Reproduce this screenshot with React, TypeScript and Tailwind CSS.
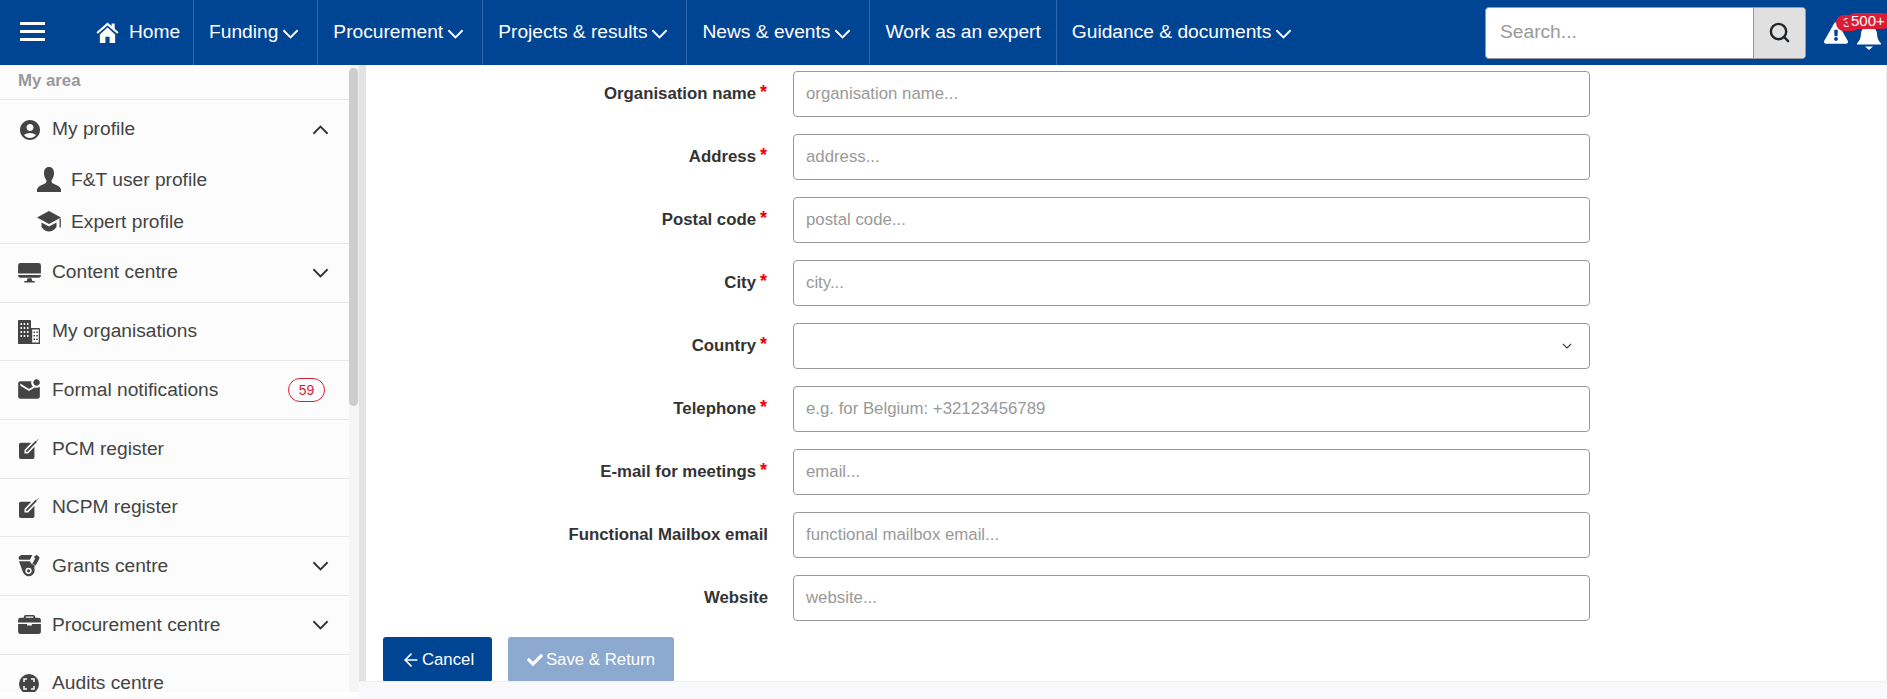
import React from 'react';
import { FaCheck, FaExclamationTriangle } from 'react-icons/fa';
import { MdAccountCircle, MdMarkEmailUnread } from 'react-icons/md';
import { Search, ArrowLeft } from 'lucide-react';

const Chevron: React.FC<{ up?: boolean; className?: string }> = ({ up, className }) => (
  <svg viewBox="0 0 18 10" fill="none" stroke="currentColor" strokeWidth="2" className={className}>
    <path d={up ? 'M1.5 9 9 1.5 16.5 9' : 'M1.5 1 9 8.5 16.5 1'} />
  </svg>
);

const HomeIcon = () => (
  <svg viewBox="0 0 24 22" className="w-[23px] h-[21px] shrink-0" fill="currentColor">
    <path d="M12 .5.4 10.700l1.500 1.700L12 3.600l10.100 8.800 1.500-1.700L19.500 7V1.500h-3.200v2.700L12 .5Z" />
    <path d="M4 13 12 5.800 20 13v9h-5.800v-6.500H9.800V22H4v-9Z" />
  </svg>
);

const BellIcon: React.FC<{ className?: string }> = ({ className }) => (
  <svg viewBox="0 0 24 26" className={className} fill="currentColor">
    <path d="M12 0c1.200 0 2 .8 2 2v.6c3.800.8 5.800 3.800 6 7.400.2 4 1.300 6.500 4 9.500v1H0v-1c2.700-3 3.800-5.500 4-9.500.2-3.600 2.200-6.600 6-7.400V2c0-1.200.8-2 2-2Z" />
    <path d="M8 22.500h8L12 26 8 22.500Z" />
  </svg>
);

const BustIcon = () => (
  <svg viewBox="0 0 24 26" className="w-[24px] h-[26px]" fill="#444">
    <path d="M12 0c3.400 0 5 2.600 5 6 0 3-1 5.400-2.300 7-.5 1.500 0 3 2.300 4 3 1.300 6 2.300 7 5.500V25H0v-2.500c1-3.200 4-4.200 7-5.500 2.300-1 2.800-2.500 2.300-4C8 11.400 7 9 7 6c0-3.400 1.600-6 5-6Z" />
  </svg>
);

const CapIcon = () => (
  <svg viewBox="0 0 24 22" className="w-[24px] h-[22px]" fill="#444">
    <path d="M12 0 0 6.500l12 6.500 12-6.500L12 0Z" />
    <path d="M4.500 11.500v4.500c2 3 5 4.500 7.500 4.500s5.500-1.500 7.500-4.500v-4.500L12 15.500l-7.500-4Z" />
    <rect x="22.500" y="7.500" width="1.300" height="9" />
  </svg>
);

const MonitorIcon = () => (
  <svg viewBox="0 0 24 21" className="w-[23px] h-[20px]" fill="#444">
    <path d="M2.500 0h19A2.500 2.500 0 0 1 24 2.500V11H0V2.500A2.500 2.500 0 0 1 2.500 0Z" />
    <path d="M0 12.500h24V13a2.500 2.500 0 0 1-2.500 2.500h-19A2.500 2.500 0 0 1 0 13v-.5Z" />
    <path d="M10 16h4l1 3h2.500v1.500h-11V19H9l1-3Z" />
  </svg>
);

const BuildingIcon = () => (
  <svg viewBox="0 0 22 24" className="w-[22px] h-[24px]">
    <path fill="#444" d="M1 0h11a1 1 0 0 1 1 1v23H0V1a1 1 0 0 1 1-1Z" />
    <path fill="#444" d="M13 8h8a1 1 0 0 1 1 1v15h-9V8Zm1.200 1.500V22.500h6.600V9.500h-6.600Z" />
    <path
      fill="#fcfcfc"
      d="M2.500 3h1.500v2H2.500zM5.700 3h1.500v2H5.700zM9 3h1.500v2H9zM2.500 7h1.500v2H2.500zM5.700 7h1.500v2H5.700zM9 7h1.500v2H9zM2.500 11h1.500v2H2.500zM5.700 11h1.500v2H5.700zM9 11h1.500v2H9zM2.500 15h1.500v2H2.500zM5.700 15h1.500v2H5.700zM9 15h1.500v2H9z"
    />
    <path fill="#444" d="M15.500 11.500h1.500v1.500h-1.500zM18.300 11.500h1.500v1.500h-1.500zM15.500 15h1.500v1.500h-1.500zM18.300 15h1.500v1.500h-1.500zM15.500 18.500h1.500V20h-1.500zM18.300 18.500h1.500V20h-1.500z" />
  </svg>
);

const EditIcon = () => (
  <svg viewBox="0 0 22 22" className="w-[20px] h-[20px]">
    <path fill="#444" d="M2 4h11.500L6 12v4h4l7-7.500V20a2 2 0 0 1-2 2H2a2 2 0 0 1-2-2V6a2 2 0 0 1 2-2Z" />
    <path fill="none" stroke="#444" strokeWidth="2" d="M8 14 19 2.500" />
    <path fill="none" stroke="#777" strokeWidth="1" d="M19 2.500 21.500.5" />
  </svg>
);

const MedalIcon = () => (
  <svg viewBox="0 0 23 24" className="w-[22px] h-[23px]" fill="#444">
    <path d="M4 0h11l-2.500 5H1.500L.5 3C1 1.500 2.500 0 4 0Z" />
    <path d="M19 0c2 .5 3.500 2 3.500 3.500L18.500 11l-3.500-2 3-5.500L16.500 2 19 0Z" />
    <path d="M1 6.500h11.500L14 9a7.500 7.500 0 0 1 2.500 1.500l1 .5-.5 2.500a7 7 0 0 1-2 7.500A6.500 6.500 0 0 1 5 17.500L1 6.500Z" />
    <circle cx="11" cy="16.500" r="3.300" fill="#fcfcfc" />
    <circle cx="11" cy="16.500" r="1.700" fill="#444" />
  </svg>
);

const ToolboxIcon = () => (
  <svg viewBox="0 0 24 20" className="w-[23px] h-[19px]" fill="#444">
    <path d="M8 0h8a2 2 0 0 1 2 2v1h3.500A2.500 2.500 0 0 1 24 5.500V8H0V5.500A2.500 2.500 0 0 1 2.500 3H6V2a2 2 0 0 1 2-2Zm0 1.500V3h8V1.500H8Z" />
    <path d="M0 9.500h9.500V11h5V9.500H24v8a2.500 2.500 0 0 1-2.500 2.500h-19A2.500 2.500 0 0 1 0 17.500v-8Z" />
  </svg>
);

const AuditIcon = () => (
  <svg viewBox="0 0 20 20" className="w-[20px] h-[20px]">
    <circle cx="10" cy="10" r="10" fill="#444" />
    <path fill="none" stroke="#fcfcfc" strokeWidth="1.500" d="M5 8V5h3M12 5h3v3M15 12v3h-3M8 15H5v-3" />
  </svg>
);

const navItems: [string, boolean][] = [
  ['Funding', true],
  ['Procurement', true],
  ['Projects & results', true],
  ['News & events', true],
];

const Header = () => (
  <header className="h-[65px] shrink-0 bg-[#004494] text-white flex items-stretch text-[19.2px] overflow-hidden">
    <div className="w-[96px] shrink-0 pl-[20px] flex items-center">
      <div className="w-[25px] flex flex-col gap-[5px] -mt-[2px]">
        <span className="h-[3px] bg-white" />
        <span className="h-[3px] bg-white" />
        <span className="h-[3px] bg-white" />
      </div>
    </div>
    <div className="w-[98px] shrink-0 flex items-center gap-[10px] border-r border-[#3568a9]">
      <HomeIcon />
      <span>Home</span>
    </div>
    {navItems.map(([label]) => (
      <div key={label} className="shrink-0 flex items-center gap-[4px] pl-[15px] pr-[18px] border-r border-[#3568a9]">
        <span>{label}</span>
        <Chevron className="w-[17px] h-[10px] mt-[2px]" />
      </div>
    ))}
    <div className="shrink-0 flex items-center px-[15px] border-r border-[#3568a9]">Work as an expert</div>
    <div className="shrink-0 flex items-center gap-[4px] pl-[15px]">
      <span>Guidance &amp; documents</span>
      <Chevron className="w-[17px] h-[10px] mt-[2px]" />
    </div>
    <div className="ml-auto flex items-center w-[402px] shrink-0">
      <div className="w-[321px] h-[52px] rounded-[4px] border border-[#999] bg-white flex overflow-hidden">
        <div className="flex-1 flex items-center pl-[14px] text-[#999]">Search...</div>
        <div className="w-[52px] bg-[#e0e0e0] border-l border-[#999] flex items-center justify-center">
          <Search strokeWidth={2.5} className="w-[23px] h-[23px] text-[#212529]" />
        </div>
      </div>
      <div className="relative ml-[18px] w-[63px] h-[52px] shrink-0">
        <FaExclamationTriangle className="absolute left-0 top-[15px] w-[24px] h-[22px]" />
        <BellIcon className="absolute left-[33px] top-[17px] w-[24px] h-[26px]" />
        <span className="absolute left-[12px] top-[8px] w-[24px] h-[16px] rounded-full bg-[#dc1c35] text-[13px] leading-[16px] pl-[7px] overflow-hidden">3</span>
        <span className="absolute left-[23px] top-[6px] w-[44px] h-[16px] rounded-full bg-[#dc1c35] text-[15px] leading-[16px] pl-[4px]">500+</span>
      </div>
    </div>
  </header>
);

type Row = { icon: React.ReactNode; label: string; caret?: boolean; badge?: string };

const rows: Row[] = [
  { icon: <MonitorIcon />, label: 'Content centre', caret: true },
  { icon: <BuildingIcon />, label: 'My organisations' },
  { icon: <MdMarkEmailUnread className="w-[26px] h-[26px] text-[#444]" />, label: 'Formal notifications', badge: '59' },
  { icon: <EditIcon />, label: 'PCM register' },
  { icon: <EditIcon />, label: 'NCPM register' },
  { icon: <MedalIcon />, label: 'Grants centre', caret: true },
  { icon: <ToolboxIcon />, label: 'Procurement centre', caret: true },
  { icon: <AuditIcon />, label: 'Audits centre' },
];

const Sidebar = () => (
  <aside className="w-[359px] h-[627px] shrink-0 flex overflow-hidden bg-[#fcfcfc]">
    <nav className="w-[349px] shrink-0 text-[#444] text-[19.2px]">
      <div className="h-[35px] pl-[18px] pt-[6px] font-bold text-[16.8px] leading-[20px] text-[#999] border-b border-[#e8e8e8]">My area</div>
      <div className="h-[144px] border-b border-[#e8e8e8]">
        <div className="h-[59px] flex items-center pr-[20px]">
          <span className="w-[52px] shrink-0 flex justify-center pl-[8px]">
            <MdAccountCircle className="w-[24px] h-[24px]" />
          </span>
          <span className="flex-1">My profile</span>
          <Chevron up className="w-[17px] h-[10px] text-[#333]" />
        </div>
        <div className="h-[42px] flex items-center pl-[37px] gap-[10px]">
          <BustIcon />
          <span>F&amp;T user profile</span>
        </div>
        <div className="h-[42px] flex items-center pl-[37px] gap-[10px]">
          <CapIcon />
          <span>Expert profile</span>
        </div>
      </div>
      {rows.map(row => (
        <div key={row.label} className="h-[58.7px] flex items-center pr-[20px] border-b border-[#e8e8e8]">
          <span className="w-[52px] shrink-0 flex justify-center pl-[8px] pr-[2px]">{row.icon}</span>
          <span className="flex-1">{row.label}</span>
          {row.caret && <Chevron className="w-[17px] h-[10px] text-[#333]" />}
          {row.badge && (
            <span className="mr-[4px] w-[37px] h-[24px] rounded-full border border-[#dc1c35] text-[#dc1c35] text-[14px] flex items-center justify-center">
              {row.badge}
            </span>
          )}
        </div>
      ))}
    </nav>
    <div className="w-[10px] shrink-0 bg-[#f5f5f5]">
      <div className="w-[9px] h-[338px] mt-[3px] rounded-[5px] bg-[#cdcdcd]" />
    </div>
  </aside>
);

type Field = { label: string; placeholder?: string; required?: boolean; select?: boolean };

const fields: Field[] = [
  { label: 'Organisation name', placeholder: 'organisation name...', required: true },
  { label: 'Address', placeholder: 'address...', required: true },
  { label: 'Postal code', placeholder: 'postal code...', required: true },
  { label: 'City', placeholder: 'city...', required: true },
  { label: 'Country', required: true, select: true },
  { label: 'Telephone', placeholder: 'e.g. for Belgium: +32123456789', required: true },
  { label: 'E-mail for meetings', placeholder: 'email...', required: true },
  { label: 'Functional Mailbox email', placeholder: 'functional mailbox email...' },
  { label: 'Website', placeholder: 'website...' },
];

const FormRow: React.FC<{ field: Field }> = ({ field }) => (
  <div className="flex items-center">
    <label className="w-[402px] shrink-0 flex justify-end font-bold text-[#333]">
      <span>{field.label}</span>
      {field.required && <span className="ml-[4px] w-[8px] mt-[1px] text-[#e00] text-[18px] leading-[20px]">*</span>}
    </label>
    <div className="ml-[25px] w-[797px] h-[46px] shrink-0 rounded-[4px] border border-[#999] bg-white flex items-center justify-between pl-[12px] pr-[17px] text-[#999]">
      <span>{field.placeholder}</span>
      {field.select && <Chevron className="w-[10px] h-[6px] text-[#333]" />}
    </div>
  </div>
);

const Main = () => (
  <main className="flex-1 min-w-0 flex flex-col h-[634px]">
    <div className="h-[616px] shrink-0 flex overflow-hidden">
      <div className="w-[7px] shrink-0 bg-[#e3e3e3]" />
      <div className="flex-1 border-r border-[#eeeeee] pt-[6px] text-[16.8px]">
        <div className="flex flex-col gap-[17px]">
          {fields.map(f => (
            <FormRow key={f.label} field={f} />
          ))}
        </div>
        <div className="flex gap-[16px] pl-[17px] mt-[16px] text-white">
          <button className="w-[109px] h-[45px] rounded-[3px] bg-[#004494] flex items-center justify-center gap-[1px]">
            <ArrowLeft strokeWidth={2} className="w-[20px] h-[20px]" />
            Cancel
          </button>
          <button className="w-[166px] h-[45px] rounded-[3px] bg-[#8ca9cf] flex items-center justify-center gap-[3px]">
            <FaCheck className="w-[16px] h-[16px]" />
            Save &amp; Return
          </button>
        </div>
      </div>
    </div>
    <div className="flex-1 bg-[#f9f9fb] border-t border-[#f0f0f3]" />
  </main>
);

export default function App() {
  return (
    <div className="w-[1887px] h-[699px] overflow-hidden flex flex-col bg-white font-['Liberation_Sans',Arial,sans-serif]">
      <Header />
      <div className="flex flex-1 min-h-0">
        <Sidebar />
        <Main />
      </div>
    </div>
  );
}
